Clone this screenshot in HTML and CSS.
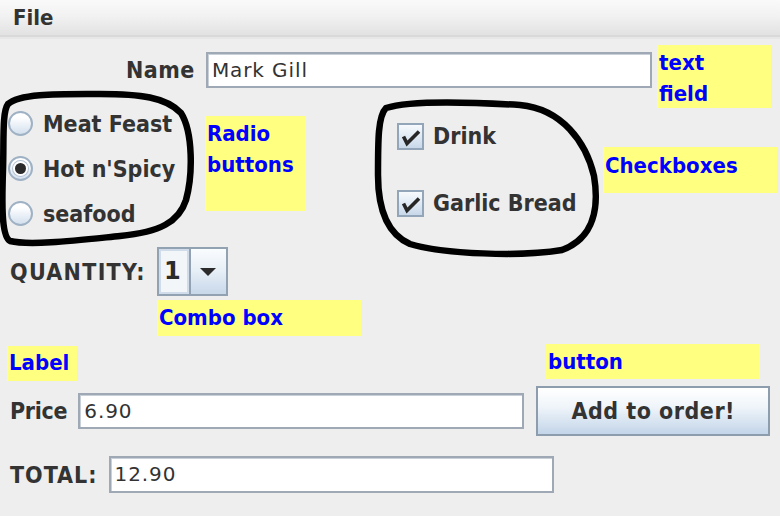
FILE: index.html
```html
<!DOCTYPE html>
<html>
<head>
<meta charset="utf-8">
<link rel="stylesheet" href="styles.css">
</head>
<body>
<div class="window">
  <div class="menubar"><span class="menu">File</span></div>
  <main class="form">
    <div class="row name-row">
      <span class="lbl name">Name</span>
      <div class="field name-field">Mark Gill</div>
    </div>
    <div class="options">
      <div class="radios">
        <div class="radio"><span class="rdot"></span><span class="lbl">Meat Feast</span></div>
        <div class="radio"><span class="rdot checked"></span><span class="lbl">Hot n'Spicy</span></div>
        <div class="radio"><span class="rdot"></span><span class="lbl">seafood</span></div>
      </div>
      <div class="checks">
        <div class="check"><span class="cbox"><svg viewBox="0 0 27 27" width="27" height="27"><path d="M6.5 13.5 L10 20.5 L22 8.5" fill="none" stroke="#262626" stroke-width="3.6" stroke-linejoin="miter"/></svg></span><span class="lbl">Drink</span></div>
        <div class="check check2"><span class="cbox"><svg viewBox="0 0 27 27" width="27" height="27"><path d="M6.5 13.5 L10 20.5 L22 8.5" fill="none" stroke="#262626" stroke-width="3.6" stroke-linejoin="miter"/></svg></span><span class="lbl">Garlic Bread</span></div>
      </div>
    </div>
    <div class="row qty-row">
      <span class="lbl qty">QUANTITY:</span>
      <div class="combo">
        <span class="combo-val">1</span>
        <span class="combo-btn"><span class="tri"></span></span>
      </div>
    </div>
    <div class="row price-row">
      <span class="lbl price">Price</span>
      <div class="field price-field">6.90</div>
      <button class="btn">Add to order!</button>
    </div>
    <div class="row total-row">
      <span class="lbl total">TOTAL:</span>
      <div class="field total-field">12.90</div>
    </div>
  </main>

  <div class="note note-text">text<br>field</div>
  <div class="note note-radio">Radio<br>buttons</div>
  <div class="note note-check">Checkboxes</div>
  <div class="note note-combo">Combo box</div>
  <div class="note note-label">Label</div>
  <div class="note note-button">button</div>

  <svg class="loops" width="780" height="516" viewBox="0 0 780 516">
    <path d="M8 104 C20 93 60 94 100 94 C140 94 166 97 181 113 C193 132 193 175 186 200 C179 222 160 232 120 236 C80 240 30 246 10 241 C1 236 2 200 3 170 C4 140 2 112 8 104 Z" fill="none" stroke="#000" stroke-width="6.5" stroke-linejoin="round"/>
    <path d="M386 108 C410 100 470 102 520 105 C562 109 586 142 594 176 C599 206 595 238 562 250 C522 257 442 254 410 244 C385 233 378 205 378 175 C378 140 378 116 386 108 Z" fill="none" stroke="#000" stroke-width="6.5" stroke-linejoin="round"/>
  </svg>
</div>
</body>
</html>
```

FILE: styles.css
```css
html, body {
  margin: 0;
  padding: 0;
}
body {
  background: #eeeeee;
  font-family: "DejaVu Sans", "Liberation Sans", sans-serif;
  color: #333333;
}
.window {
  position: relative;
  width: 780px;
  height: 516px;
  overflow: hidden;
  background: #eeeeee;
}
.menubar {
  height: 37px;
  background: linear-gradient(#fafafa, #f2f2f2 45%, #e2e2e2);
  border-bottom: 2px solid #d9d9d9;
  box-shadow: 0 2px 0 #e7e7e7;
  display: flex;
  align-items: center;
  padding-left: 13px;
  box-sizing: border-box;
}
.menu {
  font-family: "DejaVu Sans Condensed", "DejaVu Sans", sans-serif;
  font-weight: bold;
  font-size: 22px;
  color: #333;
  margin-top: -1px;
}
.form {
  display: flex;
  flex-direction: column;
  padding-top: 15px;
}
.row {
  display: flex;
  align-items: center;
}
.lbl {
  font-family: "DejaVu Sans Condensed", "DejaVu Sans", sans-serif;
  font-weight: bold;
  font-size: 23px;
  color: #333333;
  white-space: nowrap;
}
.field {
  box-sizing: border-box;
  height: 36px;
  background: #ffffff;
  border: 2px solid #9ea9b5;
  box-shadow: inset 1px 1px 0 #c9d0d8;
  font-size: 20px;
  line-height: 32px;
  padding-left: 4px;
  color: #333;
  letter-spacing: 0.9px;
}
.name-row {
  padding-left: 126px;
  gap: 11px;
}
.name {
  letter-spacing: 0.5px;
}
.name-field {
  width: 446px;
}
.options {
  display: grid;
  grid-template-columns: 397px 1fr;
  margin-top: 13px;
}
.radios {
  display: flex;
  flex-direction: column;
}
.radio {
  height: 45px;
  display: flex;
  align-items: center;
  gap: 10px;
  padding-left: 8px;
}
.rdot {
  box-sizing: border-box;
  width: 25px;
  height: 25px;
  border-radius: 50%;
  border: 2px solid #9fb1c4;
  background: linear-gradient(#ffffff 20%, #d3e0ee);
  display: flex;
  align-items: center;
  justify-content: center;
}
.rdot.checked::after {
  content: "";
  width: 11px;
  height: 11px;
  border-radius: 50%;
  background: #2b2b2b;
  box-shadow: 0 0 0 2px #ffffff, 0 0 0 3px #b4c3d3;
}
.checks {
  display: flex;
  flex-direction: column;
  padding-top: 20px;
}
.check {
  display: flex;
  align-items: center;
  gap: 9px;
  height: 30px;
}
.check2 {
  margin-top: 37px;
}
.cbox {
  box-sizing: border-box;
  width: 27px;
  height: 27px;
  border: 2px solid #93a5b8;
  background: linear-gradient(#f7fafd, #c8d8ea);
  position: relative;
  display: block;
}
.cbox svg {
  position: absolute;
  left: -2px;
  top: -2px;
}
.qty-row {
  margin-top: 11px;
  padding-left: 10px;
  gap: 11px;
}
.qty {
  letter-spacing: 1.3px;
}
.combo {
  box-sizing: border-box;
  width: 71px;
  height: 49px;
  border: 2px solid #93a2b2;
  display: flex;
}
.combo-val {
  box-sizing: border-box;
  width: 30px;
  border: 2px solid #d0dcea;
  background: #f3f6f9;
  font-size: 24px;
  font-weight: 600;
  line-height: 41px;
  padding-left: 3px;
  color: #2b2b2b;
}
.combo-btn {
  flex: 1;
  border-left: 2px solid #93a2b2;
  background: linear-gradient(#fafcfe, #e6eef6 50%, #c8d8ea);
  display: flex;
  align-items: center;
  justify-content: center;
}
.tri {
  width: 0;
  height: 0;
  border-left: 8px solid transparent;
  border-right: 8px solid transparent;
  border-top: 8px solid #2b2b2b;
}
.price-row {
  margin-top: 90px;
  padding-left: 10px;
  gap: 11px;
}
.price {
  letter-spacing: -0.3px;
}
.price-field {
  width: 446px;
}
.btn {
  box-sizing: border-box;
  width: 234px;
  height: 50px;
  margin-left: 1px;
  border: 2px solid #8e9dad;
  border-radius: 0;
  background: linear-gradient(#ffffff, #f0f5fa 40%, #c3d5e9);
  font-family: "DejaVu Sans Condensed", "DejaVu Sans", sans-serif;
  font-weight: bold;
  font-size: 23px;
  color: #333;
  letter-spacing: 0.5px;
  padding: 0;
}
.total-row {
  margin-top: 20px;
  padding-left: 10px;
  gap: 11px;
}
.total {
  letter-spacing: 1px;
}
.total-field {
  width: 445px;
  height: 37px;
}
.note {
  position: absolute;
  box-sizing: border-box;
  background: #ffff80;
  color: #0000ff;
  font-family: "DejaVu Sans Condensed", "DejaVu Sans", sans-serif;
  font-weight: bold;
  font-size: 22px;
  line-height: 31px;
  padding: 2px 0 0 2px;
  white-space: nowrap;
}
.note-text { left: 657px; top: 45px; width: 114px; height: 63px; }
.note-radio { left: 205px; top: 116px; width: 101px; height: 95px; }
.note-check { left: 603px; top: 147px; width: 174px; height: 46px; padding-top: 3px; }
.note-combo { left: 157px; top: 300px; width: 204px; height: 36px; }
.note-label { left: 7px; top: 346px; width: 70px; height: 35px; padding-top: 1px; }
.note-button { left: 546px; top: 344px; width: 214px; height: 35px; }
.loops {
  position: absolute;
  left: 0;
  top: 0;
  pointer-events: none;
}
```
